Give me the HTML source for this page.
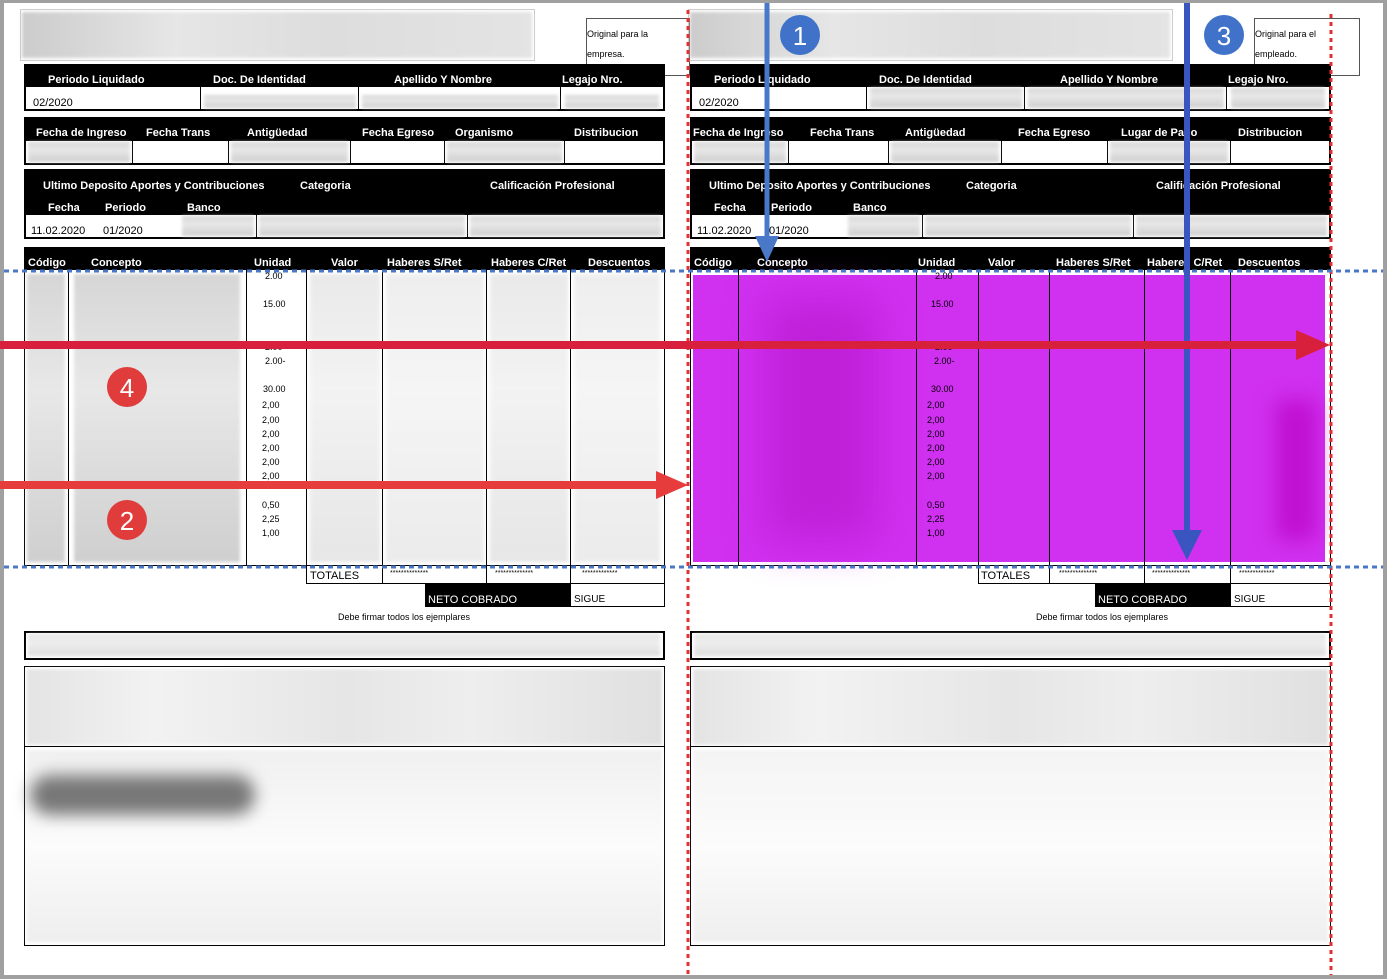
<!DOCTYPE html><html><head><meta charset="utf-8"><style>
*{margin:0;padding:0;box-sizing:border-box}
body{width:1387px;height:979px;background:#a0a0a0;position:relative;overflow:hidden;font-family:"Liberation Sans",sans-serif}
.pg{position:absolute;left:4px;top:3px;width:1379px;height:972px;background:#fff}
.a{position:absolute}
.blk{position:absolute;background:#000}
.w{position:absolute;background:#fff;border:1px solid #000}
.l{position:absolute;color:#fff;font-weight:bold;font-size:11px;white-space:nowrap}
.t{position:absolute;color:#000;font-size:11px;white-space:nowrap}
.bl{position:absolute;background:linear-gradient(#d6d6d6,#e8e8e8 40%,#cfcfcf);filter:blur(1.5px)}
.u{position:absolute;font-size:9px;color:#000}
.cl{position:absolute;width:1px;background:#000}
.copy{position:absolute;top:0;width:700px;height:979px}
</style></head><body><div class="pg"></div>

<!-- LEFT COPY -->
<div class="copy" style="left:0">
<div class="a" style="left:20px;top:9px;width:515px;height:52px;border:1px solid #ccc"></div>
<div class="bl" style="left:22px;top:12px;width:510px;height:46px;background:linear-gradient(90deg,#ccc,#e6e6e6 30%,#ddd 60%,#e4e4e4)"></div>
<div class="w" style="left:586px;top:18px;width:104px;height:58px;border-color:#555"></div>
<div class="t" style="left:587px;top:29px;font-size:9px">Original para la</div>
<div class="t" style="left:587px;top:49px;font-size:9px">empresa.</div>
<div class="blk" style="left:24px;top:64px;width:641px;height:47px"></div>
<div class="l" style="left:48px;top:74px">Periodo Liquidado</div>
<div class="l" style="left:213px;top:74px">Doc. De Identidad</div>
<div class="l" style="left:394px;top:74px">Apellido Y Nombre</div>
<div class="l" style="left:562px;top:74px">Legajo Nro.</div>
<div class="a" style="left:26px;top:87px;width:174px;height:22px;background:#fff"></div>
<div class="t" style="left:33px;top:97px">02/2020</div>
<div class="a" style="left:201px;top:87px;width:157px;height:22px;background:#fff"></div><div class="bl" style="left:204px;top:95px;width:152px;height:13px"></div>
<div class="a" style="left:359px;top:87px;width:201px;height:22px;background:#fff"></div><div class="bl" style="left:362px;top:95px;width:196px;height:13px"></div>
<div class="a" style="left:561px;top:87px;width:102px;height:22px;background:#fff"></div><div class="bl" style="left:565px;top:95px;width:94px;height:13px"></div>
<div class="blk" style="left:24px;top:117px;width:641px;height:48px"></div>
<div class="l" style="left:36px;top:127px">Fecha de Ingreso</div>
<div class="l" style="left:146px;top:127px">Fecha Trans</div>
<div class="l" style="left:247px;top:127px">Antigüedad</div>
<div class="l" style="left:362px;top:127px">Fecha Egreso</div>
<div class="l" style="left:455px;top:127px">Organismo</div>
<div class="l" style="left:574px;top:127px">Distribucion</div>
<div class="a" style="left:26px;top:141px;width:106px;height:22px;background:#fff"></div><div class="bl" style="left:28px;top:142px;width:102px;height:20px"></div>
<div class="a" style="left:133px;top:141px;width:95px;height:22px;background:#fff"></div>
<div class="a" style="left:229px;top:141px;width:121px;height:22px;background:#fff"></div><div class="bl" style="left:231px;top:142px;width:117px;height:20px"></div>
<div class="a" style="left:351px;top:141px;width:93px;height:22px;background:#fff"></div>
<div class="a" style="left:445px;top:141px;width:119px;height:22px;background:#fff"></div><div class="bl" style="left:447px;top:142px;width:115px;height:20px"></div>
<div class="a" style="left:565px;top:141px;width:98px;height:22px;background:#fff"></div>
<div class="blk" style="left:24px;top:169px;width:641px;height:70px"></div>
<div class="l" style="left:43px;top:180px">Ultimo Deposito Aportes y Contribuciones</div>
<div class="l" style="left:300px;top:180px">Categoria</div>
<div class="l" style="left:490px;top:180px">Calificación Profesional</div>
<div class="l" style="left:48px;top:202px">Fecha</div>
<div class="l" style="left:105px;top:202px">Periodo</div>
<div class="l" style="left:187px;top:202px">Banco</div>
<div class="a" style="left:26px;top:215px;width:230px;height:22px;background:#fff"></div>
<div class="bl" style="left:182px;top:216px;width:72px;height:20px"></div>
<div class="t" style="left:31px;top:225px">11.02.2020</div><div class="t" style="left:103px;top:225px">01/2020</div>
<div class="a" style="left:257px;top:215px;width:210px;height:22px;background:#fff"></div><div class="bl" style="left:259px;top:216px;width:206px;height:20px"></div>
<div class="a" style="left:468px;top:215px;width:195px;height:22px;background:#fff"></div><div class="bl" style="left:470px;top:216px;width:191px;height:20px"></div>
<div class="blk" style="left:24px;top:247px;width:641px;height:24px"></div>
<div class="l" style="left:28px;top:257px">Código</div>
<div class="l" style="left:91px;top:257px">Concepto</div>
<div class="l" style="left:254px;top:257px">Unidad</div>
<div class="l" style="left:331px;top:257px">Valor</div>
<div class="l" style="left:387px;top:257px">Haberes S/Ret</div>
<div class="l" style="left:491px;top:257px">Haberes C/Ret</div>
<div class="l" style="left:588px;top:257px">Descuentos</div>
<div class="a" style="left:24px;top:270px;width:641px;height:296px;border:1px solid #000;border-top:none;background:#fff"></div>
<div class="bl" style="left:27px;top:274px;width:38px;height:288px"></div>
<div class="cl" style="left:68px;top:270px;height:296px"></div>
<div class="bl" style="left:74px;top:274px;width:166px;height:288px"></div>
<div class="cl" style="left:246px;top:270px;height:296px"></div>
<div class="cl" style="left:306px;top:270px;height:313px"></div>
<div class="bl" style="left:310px;top:274px;width:70px;height:288px;opacity:.5"></div>
<div class="cl" style="left:382px;top:270px;height:313px"></div>
<div class="bl" style="left:386px;top:274px;width:98px;height:288px;opacity:.4"></div>
<div class="cl" style="left:486px;top:270px;height:313px"></div>
<div class="bl" style="left:490px;top:274px;width:78px;height:288px;opacity:.5"></div>
<div class="cl" style="left:570px;top:270px;height:336px"></div>
<div class="bl" style="left:574px;top:274px;width:86px;height:288px;opacity:.4"></div>
<div class="u" style="left:265px;top:271px">2.00</div>
<div class="u" style="left:263px;top:299px">15.00</div>
<div class="u" style="left:265px;top:342px">2.00</div>
<div class="u" style="left:265px;top:356px">2.00-</div>
<div class="u" style="left:263px;top:384px">30.00</div>
<div class="u" style="left:262px;top:400px">2,00</div>
<div class="u" style="left:262px;top:415px">2,00</div>
<div class="u" style="left:262px;top:429px">2,00</div>
<div class="u" style="left:262px;top:443px">2,00</div>
<div class="u" style="left:262px;top:457px">2,00</div>
<div class="u" style="left:262px;top:471px">2,00</div>
<div class="u" style="left:262px;top:500px">0,50</div>
<div class="u" style="left:262px;top:514px">2,25</div>
<div class="u" style="left:262px;top:528px">1,00</div>
<div class="a" style="left:306px;top:565px;width:359px;height:19px;border:1px solid #000;border-top:none"></div>
<div class="t" style="left:310px;top:570px">TOTALES</div>
<div class="t" style="left:390px;top:570px;font-size:7px">**************</div>
<div class="t" style="left:495px;top:570px;font-size:7px">**************</div>
<div class="t" style="left:582px;top:570px;font-size:7px">*************</div>
<div class="blk" style="left:425px;top:583px;width:146px;height:24px"></div>
<div class="a" style="left:570px;top:583px;width:95px;height:24px;border:1px solid #000;border-left:none"></div>
<div class="l" style="left:428px;top:594px;font-weight:normal">NETO COBRADO</div>
<div class="t" style="left:574px;top:594px;font-size:10px">SIGUE</div>
<div class="t" style="left:338px;top:612px;font-size:9px">Debe firmar todos los ejemplares</div>
<div class="a" style="left:24px;top:631px;width:641px;height:29px;border:2px solid #000"></div>
<div class="bl" style="left:28px;top:634px;width:632px;height:22px;opacity:.7"></div>
<div class="a" style="left:24px;top:666px;width:641px;height:280px;border:1px solid #000"></div>
<div class="bl" style="left:27px;top:669px;width:635px;height:76px;background:linear-gradient(90deg,#e4e4e4,#f2f2f2 20%,#e6e6e6 50%,#eee 70%,#e0e0e0)"></div>
<div class="a" style="left:24px;top:746px;width:641px;height:1px;background:#000"></div>
<div class="bl" style="left:27px;top:750px;width:635px;height:192px;background:linear-gradient(#f0f0f0,#fcfcfc 50%,#eeeeee)"></div>
<div class="a" style="left:30px;top:775px;width:225px;height:40px;background:#777;filter:blur(8px);border-radius:20px"></div>
</div>

<!-- RIGHT COPY -->
<div class="copy" style="left:666px">
<div class="a" style="left:22px;top:9px;width:485px;height:52px;border:1px solid #ccc"></div>
<div class="bl" style="left:24px;top:12px;width:480px;height:46px;background:linear-gradient(90deg,#ccc,#e6e6e6 30%,#ddd 60%,#e4e4e4)"></div>
<div class="w" style="left:588px;top:18px;width:106px;height:58px;border-color:#555"></div>
<div class="t" style="left:589px;top:29px;font-size:9px">Original para el</div>
<div class="t" style="left:589px;top:49px;font-size:9px">empleado.</div>
<div class="blk" style="left:24px;top:64px;width:641px;height:47px"></div>
<div class="l" style="left:48px;top:74px">Periodo Liquidado</div>
<div class="l" style="left:213px;top:74px">Doc. De Identidad</div>
<div class="l" style="left:394px;top:74px">Apellido Y Nombre</div>
<div class="l" style="left:562px;top:74px">Legajo Nro.</div>
<div class="a" style="left:26px;top:87px;width:174px;height:22px;background:#fff"></div>
<div class="t" style="left:33px;top:97px">02/2020</div>
<div class="a" style="left:201px;top:87px;width:157px;height:22px;background:#fff"></div><div class="bl" style="left:204px;top:88px;width:152px;height:20px"></div>
<div class="a" style="left:359px;top:87px;width:201px;height:22px;background:#fff"></div><div class="bl" style="left:362px;top:88px;width:196px;height:20px"></div>
<div class="a" style="left:561px;top:87px;width:102px;height:22px;background:#fff"></div><div class="bl" style="left:565px;top:88px;width:94px;height:20px"></div>
<div class="blk" style="left:24px;top:117px;width:641px;height:48px"></div>
<div class="l" style="left:27px;top:127px">Fecha de Ingreso</div>
<div class="l" style="left:144px;top:127px">Fecha Trans</div>
<div class="l" style="left:239px;top:127px">Antigüedad</div>
<div class="l" style="left:352px;top:127px">Fecha Egreso</div>
<div class="l" style="left:455px;top:127px">Lugar de Pago</div>
<div class="l" style="left:572px;top:127px">Distribucion</div>
<div class="a" style="left:26px;top:141px;width:96px;height:22px;background:#fff"></div><div class="bl" style="left:28px;top:142px;width:92px;height:20px"></div>
<div class="a" style="left:123px;top:141px;width:99px;height:22px;background:#fff"></div>
<div class="a" style="left:223px;top:141px;width:112px;height:22px;background:#fff"></div><div class="bl" style="left:225px;top:142px;width:108px;height:20px"></div>
<div class="a" style="left:336px;top:141px;width:105px;height:22px;background:#fff"></div>
<div class="a" style="left:442px;top:141px;width:122px;height:22px;background:#fff"></div><div class="bl" style="left:444px;top:142px;width:118px;height:20px"></div>
<div class="a" style="left:565px;top:141px;width:98px;height:22px;background:#fff"></div>
<div class="blk" style="left:24px;top:169px;width:641px;height:70px"></div>
<div class="l" style="left:43px;top:180px">Ultimo Deposito Aportes y Contribuciones</div>
<div class="l" style="left:300px;top:180px">Categoria</div>
<div class="l" style="left:490px;top:180px">Calificación Profesional</div>
<div class="l" style="left:48px;top:202px">Fecha</div>
<div class="l" style="left:105px;top:202px">Periodo</div>
<div class="l" style="left:187px;top:202px">Banco</div>
<div class="a" style="left:26px;top:215px;width:230px;height:22px;background:#fff"></div>
<div class="bl" style="left:182px;top:216px;width:72px;height:20px"></div>
<div class="t" style="left:31px;top:225px">11.02.2020</div><div class="t" style="left:103px;top:225px">01/2020</div>
<div class="a" style="left:257px;top:215px;width:210px;height:22px;background:#fff"></div><div class="bl" style="left:259px;top:216px;width:206px;height:20px"></div>
<div class="a" style="left:468px;top:215px;width:195px;height:22px;background:#fff"></div><div class="bl" style="left:470px;top:216px;width:191px;height:20px"></div>
<div class="blk" style="left:24px;top:247px;width:641px;height:24px"></div>
<div class="l" style="left:28px;top:257px">Código</div>
<div class="l" style="left:91px;top:257px">Concepto</div>
<div class="l" style="left:252px;top:257px">Unidad</div>
<div class="l" style="left:322px;top:257px">Valor</div>
<div class="l" style="left:390px;top:257px">Haberes S/Ret</div>
<div class="l" style="left:481px;top:257px">Haberes C/Ret</div>
<div class="l" style="left:572px;top:257px">Descuentos</div>
<div class="a" style="left:24px;top:270px;width:641px;height:296px;border:1px solid #000;border-top:none;background:#fff"></div>
<div class="a" style="left:27px;top:275px;width:632px;height:287px;background:#d030f0"></div>
<div class="a" style="left:100px;top:300px;width:110px;height:240px;background:#c020d8;filter:blur(20px)"></div>
<div class="a" style="left:610px;top:400px;width:40px;height:140px;background:#c010d0;filter:blur(10px)"></div>
<div class="cl" style="left:72px;top:270px;height:296px"></div>
<div class="cl" style="left:250px;top:270px;height:296px"></div>
<div class="cl" style="left:312px;top:270px;height:313px"></div>
<div class="cl" style="left:383px;top:270px;height:313px"></div>
<div class="cl" style="left:478px;top:270px;height:313px"></div>
<div class="cl" style="left:564px;top:270px;height:336px"></div>
<div class="u" style="left:269px;top:271px">2.00</div>
<div class="u" style="left:265px;top:299px">15.00</div>
<div class="u" style="left:269px;top:342px">2.00</div>
<div class="u" style="left:268px;top:356px">2.00-</div>
<div class="u" style="left:265px;top:384px">30.00</div>
<div class="u" style="left:261px;top:400px">2,00</div>
<div class="u" style="left:261px;top:415px">2,00</div>
<div class="u" style="left:261px;top:429px">2,00</div>
<div class="u" style="left:261px;top:443px">2,00</div>
<div class="u" style="left:261px;top:457px">2,00</div>
<div class="u" style="left:261px;top:471px">2,00</div>
<div class="u" style="left:261px;top:500px">0,50</div>
<div class="u" style="left:261px;top:514px">2,25</div>
<div class="u" style="left:261px;top:528px">1,00</div>
<div class="a" style="left:312px;top:565px;width:353px;height:19px;border:1px solid #000;border-top:none"></div>
<div class="t" style="left:315px;top:570px">TOTALES</div>
<div class="t" style="left:393px;top:570px;font-size:7px">**************</div>
<div class="t" style="left:486px;top:570px;font-size:7px">**************</div>
<div class="t" style="left:573px;top:570px;font-size:7px">*************</div>
<div class="blk" style="left:429px;top:583px;width:136px;height:24px"></div>
<div class="a" style="left:564px;top:583px;width:101px;height:24px;border:1px solid #000;border-left:none"></div>
<div class="l" style="left:432px;top:594px;font-weight:normal">NETO COBRADO</div>
<div class="t" style="left:568px;top:594px;font-size:10px">SIGUE</div>
<div class="t" style="left:370px;top:612px;font-size:9px">Debe firmar todos los ejemplares</div>
<div class="a" style="left:24px;top:631px;width:641px;height:29px;border:2px solid #000"></div>
<div class="bl" style="left:28px;top:634px;width:632px;height:22px;opacity:.7"></div>
<div class="a" style="left:24px;top:666px;width:641px;height:280px;border:1px solid #000"></div>
<div class="bl" style="left:27px;top:669px;width:635px;height:76px;background:linear-gradient(90deg,#e4e4e4,#f2f2f2 20%,#e6e6e6 50%,#eee 70%,#e0e0e0)"></div>
<div class="a" style="left:24px;top:746px;width:641px;height:1px;background:#000"></div>
<div class="bl" style="left:27px;top:750px;width:635px;height:192px;background:linear-gradient(#f4f4f4,#fcfcfc 50%,#efefef)"></div>
</div>

<svg class="a" style="left:0;top:0" width="1387" height="979">
<g stroke="#e03030" stroke-width="3" stroke-dasharray="4 4">
<line x1="688" y1="10" x2="688" y2="975"/><line x1="1331" y1="14" x2="1331" y2="975"/></g>
<g stroke="#4a78c8" stroke-width="3" stroke-dasharray="5 4">
<line x1="4" y1="271" x2="1383" y2="271"/><line x1="4" y1="567" x2="1383" y2="567"/></g>
<g fill="#4a78c8" stroke="#4a78c8">
<line x1="767" y1="3" x2="767" y2="240" stroke-width="5"/><polygon points="755,236 779,236 767,262" stroke="none"/>
<line x1="1187" y1="3" x2="1187" y2="532" stroke="#3b55c0" stroke-width="6"/><polygon points="1172,530 1202,530 1187,560" fill="#3b55c0" stroke="none"/>
</g>
<g fill="#e63c3c">
<rect x="0" y="341" width="1300" height="8" fill="#d8203c"/><polygon points="1296,330 1330,345 1296,360" fill="#d8203c"/>
<rect x="0" y="481" width="660" height="8"/><polygon points="656,471 688,485 656,499"/>
</g>
<g font-family="Liberation Sans,sans-serif" font-size="26" fill="#fff" text-anchor="middle">
<circle cx="800" cy="35" r="20" fill="#3f72c8"/><text x="800" y="45">1</text>
<circle cx="1224" cy="35" r="20" fill="#3f72c8"/><text x="1224" y="45">3</text>
<circle cx="127" cy="387" r="20" fill="#e03c3c"/><text x="127" y="397">4</text>
<circle cx="127" cy="520" r="20" fill="#e03c3c"/><text x="127" y="530">2</text>
</g>
</svg>
</body></html>
